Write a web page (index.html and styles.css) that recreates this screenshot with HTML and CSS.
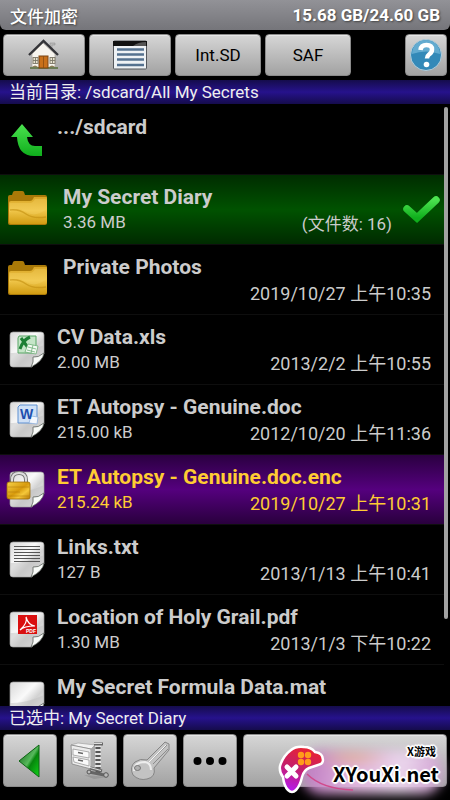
FILE: index.html
```html
<!DOCTYPE html>
<html lang="zh-CN">
<head>
    <meta charset="UTF-8">
    <meta name="viewport" content="width=device-width, initial-scale=1.0">
    <title>文件加密</title>
    <link rel="stylesheet" href="styles.css">
</head>
<body>
    <!-- shared icon parts -->
    <svg class="defs" width="0" height="0" aria-hidden="true">
        <defs>
            <linearGradient id="gPaper" x1="0" y1="0" x2="1" y2="1">
                <stop offset="0" stop-color="#d8d8d8"/>
                <stop offset="0.4" stop-color="#fafafa"/>
                <stop offset="0.6" stop-color="#d2d2d2"/>
                <stop offset="1" stop-color="#f4f4f4"/>
            </linearGradient>
            <linearGradient id="gFolder" x1="0" y1="0" x2="0" y2="1">
                <stop offset="0" stop-color="#d9a626"/>
                <stop offset="0.5" stop-color="#f0c64a"/>
                <stop offset="1" stop-color="#d19c12"/>
            </linearGradient>
            <linearGradient id="gGreen" x1="0" y1="0" x2="0" y2="1">
                <stop offset="0" stop-color="#4be24f"/>
                <stop offset="1" stop-color="#0fae1c"/>
            </linearGradient>
            <linearGradient id="gGold" x1="0" y1="0" x2="1" y2="1">
                <stop offset="0" stop-color="#f7d34a"/>
                <stop offset="0.5" stop-color="#d79a0c"/>
                <stop offset="0.7" stop-color="#f5c83a"/>
                <stop offset="1" stop-color="#b87a05"/>
            </linearGradient>
            <symbol id="page" viewBox="0 0 42 42">
                <path d="M7 3h28a3 3 0 0 1 3 3v19L26 38H7a3 3 0 0 1-3-3V6a3 3 0 0 1 3-3z" fill="url(#gPaper)" stroke="#9a9a9a" stroke-width="0.7"/>
                <path d="M4 24q14 1 34-8v9L26 38H7a3 3 0 0 1-3-3z" fill="#bcbcbc" opacity="0.45"/>
                <path d="M25 38q3-5 2-10 5 1 11-4-1 8-13 14z" fill="#f8fbf8" stroke="#5f665f" stroke-width="0.8"/>
            </symbol>
            <symbol id="folder" viewBox="0 0 42 42">
                <path d="M2 8q0-2 2-2h2l1-3q.5-1 2-1h7q1.500 0 2 1l1 3h20q2 0 2 2v26q0 2-2 2H4q-2 0-2-2z" fill="#a97908"/>
                <path d="M3 14q0-2 2-2h19q2 0 3-2l1-2h12q1 0 1 1v24q0 2-2 2H5q-2 0-2-2z" fill="url(#gFolder)"/>
                <path d="M4 23q7-6 16 0t21-3v-8q0-2-2-2H29q-2 4-5 4H4z" fill="#f7d566" opacity="0.35"/>
                <path d="M4 21q9-1 16 4t20 3" fill="none" stroke="#c28d0f" stroke-width="1.500" opacity="0.6"/>
            </symbol>
        </defs>
    </svg>

    <div class="app">
        <header class="title-bar">
            <h1>文件加密</h1>
            <span class="storage">15.68 GB/24.60 GB</span>
        </header>

        <nav class="toolbar">
            <button class="btn" type="button" aria-label="主目录">
                <svg width="32" height="32" viewBox="0 0 32 32">
                    <path d="M22 4h5v2h-3v6h-2z" fill="#b9b9b9" stroke="#888" stroke-width="0.5"/>
                    <path d="M4 15L15 4l12 11v14H4z" fill="#f7f4ee" stroke="#a9a49b" stroke-width="0.7"/>
                    <path d="M2 28h28v2H2z" fill="#6c7c55"/>
                    <path d="M1 16L15.500 2 30 16" fill="none" stroke="#343438" stroke-width="2.400"/>
                    <rect x="11" y="17" width="9" height="12" fill="#c9701a" stroke="#7a4210"/>
                    <path d="M15.500 17v12" stroke="#8a4b10" stroke-width="0.8"/>
                    <g fill="#e9e4d0" stroke="#7c7768" stroke-width="0.9">
                        <rect x="5" y="18.500" width="5" height="6"/>
                        <rect x="22" y="18.500" width="5" height="6"/>
                        <path d="M7.500 18.500v6M5 21.500h5M24.500 18.500v6M22 21.500h5"/>
                    </g>
                    <path d="M4 28q3-3 6 0zM21 28q3-3 6 0z" fill="#8c7d55"/>
                </svg>
            </button>
            <button class="btn" type="button" aria-label="列表">
                <svg width="34" height="30" viewBox="0 0 34 30">
                    <rect x="0.500" y="1" width="33" height="28" rx="1" fill="#eef2f5" stroke="#55585c"/>
                    <path d="M0 1h34v5H0z" fill="#111"/>
                    <path d="M20 6q5-4 13-4v4z" fill="#555"/>
                    <path d="M4 9.500h27M4 14.500h27M4 19.500h27M4 25h27" stroke="#54718f" stroke-width="2.600"/>
                </svg>
            </button>
            <button class="btn" type="button">Int.SD</button>
            <button class="btn" type="button">SAF</button>
            <button class="btn btn-help" type="button" aria-label="帮助">
                <svg width="34" height="34" viewBox="0 0 34 34">
                    <circle cx="17" cy="17" r="15.500" fill="#3389b8" stroke="#b4cedb"/>
                    <path d="M3 16a14 14 0 0 1 28 0q-14-5-28 0z" fill="#63abd0"/>
                    <path d="M11.500 12q.5-5 6-5 5.500 0 5.500 4.500 0 3-3 5-2 1.500-2 4" fill="none" stroke="#fff" stroke-width="4.500"/>
                    <circle cx="17.500" cy="26.500" r="2.800" fill="#fff"/>
                </svg>
            </button>
        </nav>

        <div class="info-bar">当前目录: /sdcard/All My Secrets</div>

        <main class="list-wrap">
            <ul class="file-list">
                <li class="file">
                    <svg class="icon" viewBox="0 0 42 42">
                        <path d="M16 5l11 13h-6q1 9 8 9h7v10h-8Q12 37 11 18H5z" fill="url(#gGreen)"/>
                    </svg>
                    <div class="info">
                        <div class="name">.../sdcard</div>
                        <div class="meta"></div>
                    </div>
                </li>
                <li class="file folder checked">
                    <svg class="icon" viewBox="0 0 42 42"><use href="#folder"/></svg>
                    <div class="info">
                        <div class="name">My Secret Diary</div>
                        <div class="meta"><span>3.36 MB</span><span class="date">(文件数: 16)</span></div>
                    </div>
                    <svg class="check" width="40" height="30" viewBox="0 0 40 30">
                        <path d="M5 14l10 9L34 5" fill="none" stroke="url(#gGreen)" stroke-width="7.500" stroke-linecap="round"/>
                    </svg>
                </li>
                <li class="file folder">
                    <svg class="icon" viewBox="0 0 42 42"><use href="#folder"/></svg>
                    <div class="info">
                        <div class="name">Private Photos</div>
                        <div class="meta"><span class="date">2019/10/27 上午10:35</span></div>
                    </div>
                </li>
                <li class="file">
                    <svg class="icon" viewBox="0 0 42 42">
                        <use href="#page"/>
                        <path d="M13 7h17v9l-3 8H12V9z" fill="#c5e5c8" stroke="#56a565"/>
                        <path d="M14 20q3-9 10-12M15 9l8 11" fill="none" stroke="#1d7f35" stroke-width="3"/>
                        <path d="M22 15l10 2-2 8-11-2z" fill="#f2faf2" stroke="#6fae79" stroke-width="0.8"/>
                        <path d="M22 18l8 2M21 21l8 2M27 16l-2 8" stroke="#6fae79" stroke-width="0.8"/>
                    </svg>
                    <div class="info">
                        <div class="name">CV Data.xls</div>
                        <div class="meta"><span>2.00 MB</span><span class="date">2013/2/2 上午10:55</span></div>
                    </div>
                </li>
                <li class="file">
                    <svg class="icon" viewBox="0 0 42 42">
                        <use href="#page"/>
                        <path d="M14 6h17v13l-5 5H12V8z" fill="#cfe0f5" stroke="#5c8fd0"/>
                        <path d="M25 17l7 1-1 7-8-1z" fill="#f4f8fd" stroke="#8eb0dc" stroke-width="0.8"/>
                        <text class="word-mark" x="14" y="20">W</text>
                    </svg>
                    <div class="info">
                        <div class="name">ET Autopsy - Genuine.doc</div>
                        <div class="meta"><span>215.00 kB</span><span class="date">2012/10/20 上午11:36</span></div>
                    </div>
                </li>
                <li class="file encrypted">
                    <svg class="icon" viewBox="0 0 42 42">
                        <use href="#page"/>
                        <path d="M6 15V11q0-7 7-7t7 7v4" fill="none" stroke="#777" stroke-width="4"/>
                        <path d="M6 15V11q0-7 7-7t7 7v4" fill="none" stroke="#dedede" stroke-width="2"/>
                        <rect x="1" y="13" width="23" height="17" rx="2" fill="url(#gGold)" stroke="#9c6c08" stroke-width="0.8"/>
                        <path d="M2 18h21M2 23h12M2 27h21" stroke="#a97208" stroke-width="0.8" opacity="0.6"/>
                    </svg>
                    <div class="info">
                        <div class="name">ET Autopsy - Genuine.doc.enc</div>
                        <div class="meta"><span>215.24 kB</span><span class="date">2019/10/27 上午10:31</span></div>
                    </div>
                </li>
                <li class="file">
                    <svg class="icon" viewBox="0 0 42 42">
                        <use href="#page"/>
                        <path d="M8 7.500h26M8 10.500h26M8 13.500h26M8 16.500h26M8 19.500h26M8 22.500h26" stroke="#555" stroke-width="1.100"/>
                    </svg>
                    <div class="info">
                        <div class="name">Links.txt</div>
                        <div class="meta"><span>127 B</span><span class="date">2013/1/13 上午10:41</span></div>
                    </div>
                </li>
                <li class="file">
                    <svg class="icon" viewBox="0 0 42 42">
                        <use href="#page"/>
                        <rect x="12" y="6" width="19" height="19" fill="#d90f0f"/>
                        <path d="M20 8q2 6-6 13 4-4 15-4-7-1-9-9z" fill="none" stroke="#fff" stroke-width="1.200"/>
                        <text class="pdf-mark" x="20" y="24">PDF</text>
                    </svg>
                    <div class="info">
                        <div class="name">Location of Holy Grail.pdf</div>
                        <div class="meta"><span>1.30 MB</span><span class="date">2013/1/3 下午10:22</span></div>
                    </div>
                </li>
                <li class="file">
                    <svg class="icon" viewBox="0 0 42 42"><use href="#page"/></svg>
                    <div class="info">
                        <div class="name">My Secret Formula Data.mat</div>
                        <div class="meta"></div>
                    </div>
                </li>
            </ul>
            <div class="scroll-thumb"></div>
        </main>

        <div class="info-bar">已选中: My Secret Diary</div>

        <footer class="actions">
            <button class="btn" type="button" aria-label="返回">
                <svg width="24" height="34" viewBox="0 0 24 34">
                    <defs>
                        <linearGradient id="gBack" x1="0" y1="0" x2="1" y2="1">
                            <stop offset="0" stop-color="#0a5a10"/>
                            <stop offset="0.5" stop-color="#57b95c"/>
                            <stop offset="0.6" stop-color="#06860c"/>
                            <stop offset="1" stop-color="#10d41a"/>
                        </linearGradient>
                    </defs>
                    <path d="M21 1v32L1 17z" fill="url(#gBack)" stroke="#0d6413"/>
                </svg>
            </button>
            <button class="btn" type="button" aria-label="压缩">
                <svg width="40" height="38" viewBox="0 0 40 38">
                    <path d="M14 33l24 2-14 2z" fill="#888" opacity="0.5"/>
                    <path d="M1 3l7-2 17 2-4 4z" fill="#f2f2f2" stroke="#999" stroke-width="0.6"/>
                    <path d="M1 3l20 4v20L2 22z" fill="#ececec" stroke="#858585" stroke-width="0.8"/>
                    <path d="M21 7l4-4v20l-4 4z" fill="#a8a8a8"/>
                    <path d="M3 7l16 3v6L3 13zM3 15l16 3v6L4 20z" fill="#fafafa" stroke="#9b9b9b" stroke-width="0.8"/>
                    <path d="M8 10.500l5 1M8 18l5 1" stroke="#666" stroke-width="1.300"/>
                    <path d="M28 3v28" stroke="#555" stroke-width="5"/>
                    <path d="M28 3v28" stroke="#e4e4e4" stroke-width="6" stroke-dasharray="2 2"/>
                    <path d="M24 2h9M20 26l12 3M19 30l15 3" stroke="#666" stroke-width="3"/>
                    <path d="M24 1.500h8M20 25.500l11 3" stroke="#ddd" stroke-width="1"/>
                    <circle cx="36" cy="33" r="2.300" fill="#bbb" stroke="#555"/>
                    <circle cx="19" cy="30" r="2" fill="#bbb" stroke="#555"/>
                </svg>
            </button>
            <button class="btn" type="button" aria-label="密钥">
                <svg width="42" height="40" viewBox="0 0 42 40">
                    <path d="M18 19L36 1l4 2v6L25 27q2 9-7 11-8 2-14-4-4-8 2-13 5-4 12-2z" fill="#c3c3c3" stroke="#858585"/>
                    <path d="M5 30q0-9 11-9 6 1 6 8" fill="none" stroke="#ededed" stroke-width="2"/>
                    <path d="M21 20L38 4M24 23L39 8" stroke="#8c8c8c"/>
                    <path d="M20 21L37 4" stroke="#f4f4f4"/>
                    <ellipse cx="8.500" cy="27" rx="3" ry="2.500" fill="#b1b1b1" stroke="#777"/>
                </svg>
            </button>
            <button class="btn" type="button" aria-label="更多">
                <svg width="34" height="10" viewBox="0 0 34 10">
                    <circle cx="4.500" cy="5" r="4"/>
                    <circle cx="17" cy="5" r="4"/>
                    <circle cx="29.500" cy="5" r="4"/>
                </svg>
            </button>
            <button class="btn" type="button" aria-label="加密"></button>

            <div class="brand">
                <div class="brand-glow"></div>
                <svg class="brand-pad" width="48" height="50" viewBox="0 0 48 50">
                    <defs>
                        <linearGradient id="gPad" x1="0.600" y1="0" x2="0.300" y2="1">
                            <stop offset="0" stop-color="#ea2330"/>
                            <stop offset="0.500" stop-color="#c41f6c"/>
                            <stop offset="1" stop-color="#b51af0"/>
                        </linearGradient>
                    </defs>
                    <path d="M13 6Q18 2 26 3q7 0 11 5 8 1 8 8 0 4-5 5l-9 3q-5 2-7 9-2 9-6 13-4 4-8 0-4-4-5-13-4-5-3-11 3-10 11-16z" fill="url(#gPad)" stroke="#fff" stroke-width="2.500"/>
                    <g fill="#ff9c1b">
                        <circle cx="23" cy="11" r="3.200"/>
                        <circle cx="30" cy="11" r="3.200"/>
                        <circle cx="23" cy="18" r="3.200"/>
                        <circle cx="30" cy="18" r="3.200"/>
                    </g>
                    <path d="M9 23l9 9M18 23l-9 9" stroke="#fff" stroke-width="5" stroke-linecap="round"/>
                </svg>
                <svg class="brand-swoosh" width="50" height="20" viewBox="0 0 50 20">
                    <path d="M1 1q15 15 46 16" fill="none" stroke="#d14a8c" stroke-width="1.500"/>
                </svg>
                <div class="brand-text">
                    <span class="brand-small">X游戏</span>
                    <span class="brand-name">XYouXi.net</span>
                </div>
            </div>
        </footer>
    </div>
</body>
</html>
```
FILE: styles.css
```css
* {
    box-sizing: border-box;
}
body {
    margin: 0;
    background: #000;
    color: #ccc;
    font-family: Roboto, "Noto Sans CJK SC", sans-serif;
}
.defs {
    position: absolute;
}
.app {
    display: flex;
    flex-direction: column;
    height: 100vh;
    overflow: hidden;
}
.title-bar {
    display: flex;
    align-items: center;
    justify-content: space-between;
    height: 30px;
    padding: 0 10px;
    color: #fff;
    background: linear-gradient(#929297, #75757a);
    border-radius: 0 0 6px 6px;
    text-shadow: 1px 1px 2px #444;
}
.title-bar h1 {
    margin: 0;
    font-size: 17px;
    font-weight: 500;
}
.storage {
    font-size: 17px;
    font-weight: 700;
}
.toolbar {
    display: grid;
    grid-template-columns: 82fr 82fr 86fr 86fr 46fr 42fr;
    gap: 4px;
    height: 50px;
    padding: 4px 3px;
}
.btn {
    display: flex;
    align-items: center;
    justify-content: center;
    padding: 0;
    border: 1px solid #8b8b8b;
    border-radius: 4px;
    background: linear-gradient(#d6d6d6, #a2a2a2);
    box-shadow: inset 0 1px 0 #e6e6e6;
    color: #000;
    font-family: inherit;
    font-size: 17px;
    cursor: pointer;
}
.btn-help {
    grid-column: 6;
}
.info-bar {
    flex: none;
    height: 24px;
    padding: 0 9px;
    color: #eee;
    font-size: 17px;
    line-height: 25px;
    white-space: nowrap;
    background: linear-gradient(#150c4c, #26128c 50%, #150c4c);
}
.list-wrap {
    position: relative;
    flex: 1;
    min-height: 0;
    padding: 1px 6px 0 0;
    overflow: hidden;
}
.file-list {
    margin: 0;
    padding: 0;
    list-style: none;
}
.file {
    position: relative;
    display: flex;
    height: 70px;
    padding: 10px 13px 0 6px;
    border-bottom: 1px solid #0e0e0e;
}
.icon {
    flex: none;
    width: 42px;
    height: 42px;
    margin: 4px 9px 0 0;
}
.folder .icon {
    margin-right: 15px;
}
.info {
    flex: 1;
    min-width: 0;
}
.name {
    font-size: 21px;
    font-weight: 700;
    line-height: 24px;
    white-space: nowrap;
}
.meta {
    display: flex;
    font-size: 17px;
    line-height: 26px;
}
.date {
    margin-left: auto;
    padding-top: 2px;
    font-size: 18px;
}
.checked {
    background: linear-gradient(#002c00, #005200 50%, #002a00);
}
.checked .date {
    margin-right: 39px;
    font-size: 17px;
}
.check {
    position: absolute;
    top: 20px;
    right: 2px;
}
.encrypted {
    color: #fc3;
    background: linear-gradient(#2a0040, #55007e 50%, #29003d);
}
.word-mark {
    fill: #1c4fae;
    font: 700 14px "Liberation Sans", sans-serif;
}
.pdf-mark {
    fill: #fff;
    font: 700 5px "Liberation Sans", sans-serif;
}
.scroll-thumb {
    position: absolute;
    top: 3px;
    right: 2px;
    width: 4px;
    height: 85%;
    border-radius: 2px;
    background: #a2a2a2;
}
.actions {
    position: relative;
    display: grid;
    grid-template-columns: 54fr 54fr 54fr 54fr 204fr;
    gap: 6px;
    height: 70px;
    padding: 4px 3px 13px;
}
.brand {
    position: absolute;
    right: 0;
    bottom: 0;
    width: 174px;
    height: 60px;
    overflow: hidden;
}
.brand-glow {
    position: absolute;
    top: 10px;
    left: 26px;
    width: 140px;
    height: 44px;
    border-radius: 20px;
    background:
        radial-gradient(ellipse 40px 8px at 36% 8px, #e2b28c, transparent),
        linear-gradient(100deg, #b974bd, #deaedb 35%, #ead6ec 70%, #cf9bd0);
    filter: blur(6px);
}
.brand-pad {
    position: absolute;
    top: 4px;
    left: 2px;
}
.brand-swoosh {
    position: absolute;
    top: 33px;
    left: 30px;
}
.brand-text {
    position: absolute;
    top: 3px;
    right: 11px;
    display: flex;
    flex-direction: column;
    align-items: flex-end;
    color: #000;
    font-family: "Noto Sans CJK SC", sans-serif;
    font-weight: 700;
    text-shadow: 1px 1px 1px #fff, -1px -1px 1px #fff, 1px -1px 1px #fff, -1px 1px 1px #fff, 2px 0 1px #fff, -2px 0 1px #fff, 0 2px 1px #fff, 0 -2px 1px #fff;
}
.brand-small {
    margin-right: 3px;
    font-size: 11px;
    line-height: 16px;
}
.brand-name {
    font-size: 20px;
    line-height: 30px;
}
```
